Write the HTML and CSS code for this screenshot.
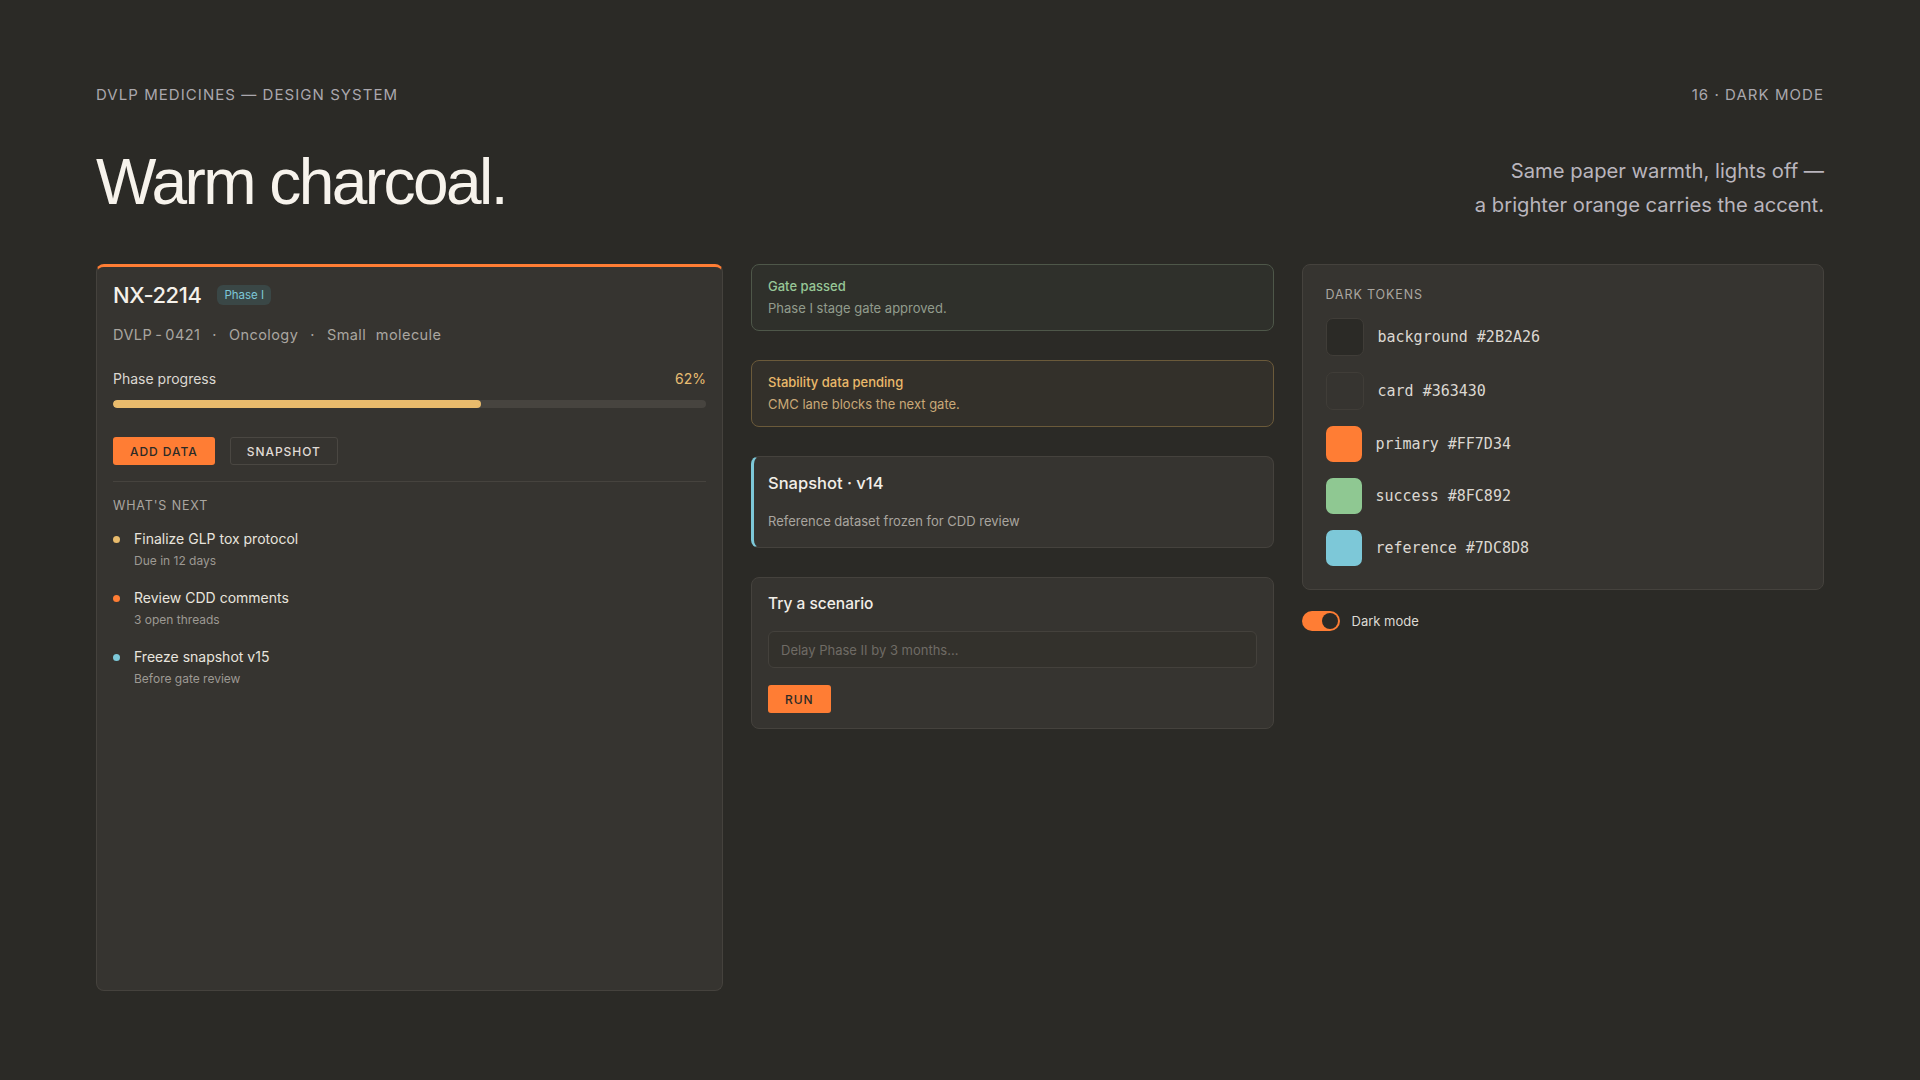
FILE: index.html
```html
<!DOCTYPE html>
<html>
<head>
    <title>Dark Mode - DVLP Design System</title>
    <meta name="viewport" content="width=device-width, initial-scale=1.0">
    <link rel="stylesheet" href="styles.css">
</head>
<body>
    <div class="page">
        <header class="topbar">
            <span class="eyebrow">DVLP MEDICINES — DESIGN SYSTEM</span>
            <span class="eyebrow">16 · DARK MODE</span>
        </header>

        <section class="hero">
            <h1 class="heading">Warm charcoal.</h1>
            <p class="lede">Same paper warmth, lights off —<br>a brighter orange carries the accent.</p>
        </section>

        <main class="grid">
            <!-- Program card -->
            <article class="card program">
                <div class="title-row">
                    <h2 class="program-name">NX-2214</h2>
                    <span class="badge">Phase I</span>
                </div>
                <div class="meta">DVLP<span class="dash">-</span>0421<span class="sep">·</span>Oncology<span class="sep">·</span>Small molecule</div>

                <div class="progress-head">
                    <span>Phase progress</span>
                    <span class="pct">62%</span>
                </div>
                <div class="bar"><div class="bar-fill" style="width: 62%"></div></div>

                <div class="actions">
                    <button class="btn btn-primary">Add data</button>
                    <button class="btn btn-ghost">Snapshot</button>
                </div>

                <div class="next">
                    <div class="section-label">WHAT'S NEXT</div>
                    <ul class="todo">
                        <li>
                            <span class="dot dot-amber"></span>
                            <div>
                                <div class="todo-title">Finalize GLP tox protocol</div>
                                <div class="todo-sub">Due in 12 days</div>
                            </div>
                        </li>
                        <li>
                            <span class="dot dot-orange"></span>
                            <div>
                                <div class="todo-title">Review CDD comments</div>
                                <div class="todo-sub">3 open threads</div>
                            </div>
                        </li>
                        <li>
                            <span class="dot dot-teal"></span>
                            <div>
                                <div class="todo-title">Freeze snapshot v15</div>
                                <div class="todo-sub">Before gate review</div>
                            </div>
                        </li>
                    </ul>
                </div>
            </article>

            <!-- Middle column -->
            <div class="stack">
                <div class="callout callout-ok">
                    <div class="callout-title">Gate passed</div>
                    <div class="callout-text">Phase I stage gate approved.</div>
                </div>
                <div class="callout callout-warn">
                    <div class="callout-title">Stability data pending</div>
                    <div class="callout-text">CMC lane blocks the next gate.</div>
                </div>
                <div class="card snapshot">
                    <div class="snapshot-title">Snapshot · v14</div>
                    <div class="snapshot-text">Reference dataset frozen for CDD review</div>
                </div>
                <div class="card scenario">
                    <div class="scenario-title">Try a scenario</div>
                    <input class="scenario-input" type="text" placeholder="Delay Phase II by 3 months...">
                    <button class="btn btn-primary">Run</button>
                </div>
            </div>

            <!-- Right column -->
            <div class="stack stack-tight">
                <div class="card tokens">
                    <div class="section-label">DARK TOKENS</div>
                    <ul class="token-list">
                        <li><span class="swatch swatch-outline sw-bg"></span><code>background #2B2A26</code></li>
                        <li><span class="swatch swatch-outline sw-card"></span><code>card #363430</code></li>
                        <li><span class="swatch sw-primary"></span><code>primary #FF7D34</code></li>
                        <li><span class="swatch sw-success"></span><code>success #8FC892</code></li>
                        <li><span class="swatch sw-ref"></span><code>reference #7DC8D8</code></li>
                    </ul>
                </div>
                <div class="toggle-row">
                    <span class="toggle"><span class="knob"></span></span>
                    <span>Dark mode</span>
                </div>
            </div>
        </main>
    </div>
</body>
</html>
```

FILE: styles.css
```css
* {
    box-sizing: border-box;
}

body {
    margin: 0;
    background-color: #2b2a26;
    color: #e8e4de;
    font-family: Inter, "Liberation Sans", sans-serif;
}

.page {
    height: 1080px;
    padding: 85px 96px 89px;
    display: flex;
    flex-direction: column;
}

.topbar {
    display: flex;
    justify-content: space-between;
}

.eyebrow {
    font-size: 15px;
    line-height: 20px;
    letter-spacing: 0.07em;
    color: #aaa7ad;
}

.hero {
    margin-top: 42px;
    display: flex;
    justify-content: space-between;
    align-items: flex-end;
}

.heading {
    margin: 0 0 5px;
    font-family: "Liberation Sans", Arial, sans-serif;
    font-weight: 400;
    font-size: 64px;
    line-height: 1.1;
    letter-spacing: -0.04em;
    color: #f7f3ec;
}

.lede {
    margin: 0;
    text-align: right;
    font-size: 20.2px;
    line-height: 34px;
    color: #b9b5bd;
}

.grid {
    flex: 1;
    margin-top: 42px;
    display: grid;
    grid-template-columns: 1.2fr 1fr 1fr;
    gap: 28px;
}

.card {
    background-color: #363430;
    border: 1px solid #45423d;
    border-radius: 8px;
}

/* program card */
.program {
    border-top: 3px solid #ff7d34;
    padding: 16px;
}

.title-row {
    display: flex;
    align-items: center;
    gap: 16px;
    height: 24px;
}

.program-name {
    margin: 0;
    font-size: 22px;
    font-weight: 500;
    letter-spacing: -0.02em;
    color: #f5f1ea;
}

.badge {
    font-size: 11.5px;
    line-height: 20px;
    padding: 0 7px;
    border-radius: 6px;
    background-color: #3a4746;
    color: #7dc8d8;
}

.meta {
    margin-top: 18px;
    font-size: 14.5px;
    line-height: 20px;
    letter-spacing: 0.03em;
    word-spacing: 5px;
    color: #aaa6a0;
}

.dash {
    margin: 0 3px;
}

.sep {
    margin: 0 12px;
}

.progress-head {
    margin-top: 25px;
    display: flex;
    justify-content: space-between;
    font-size: 14px;
    line-height: 18px;
    color: #dcd8d2;
}

.pct {
    color: #e8bd72;
}

.bar {
    margin-top: 12px;
    height: 8px;
    border-radius: 4px;
    background-color: #47443f;
    overflow: hidden;
}

.bar-fill {
    height: 100%;
    border-radius: 4px;
    background-color: #e9bb6c;
}

.actions {
    margin-top: 29px;
    display: flex;
    gap: 15px;
}

.btn {
    height: 28px;
    padding: 0 16px;
    border: 1px solid transparent;
    border-radius: 3px;
    font-family: Inter, "Liberation Sans", sans-serif;
    font-size: 12px;
    font-weight: 500;
    letter-spacing: 0.08em;
    text-transform: uppercase;
    cursor: pointer;
}

.btn-primary {
    background-color: #ff7d34;
    color: #2b2a26;
}

.btn-ghost {
    background-color: transparent;
    border-color: #4a4742;
    color: #e0dcd6;
}

.next {
    margin-top: 16px;
    padding-top: 16px;
    border-top: 1px solid #46433e;
}

.section-label {
    font-size: 12.5px;
    line-height: 16px;
    letter-spacing: 0.07em;
    color: #aaa6a0;
}

.todo {
    list-style: none;
    margin: 15px 0 0;
    padding: 0;
    display: flex;
    flex-direction: column;
    gap: 19px;
}

.todo li {
    display: flex;
    gap: 14px;
}

.dot {
    width: 7px;
    height: 7px;
    margin-top: 7px;
    border-radius: 50%;
    flex-shrink: 0;
}

.dot-amber { background-color: #e9bb6c; }
.dot-orange { background-color: #ff7d34; }
.dot-teal { background-color: #7dc8d8; }

.todo-title {
    font-size: 14px;
    line-height: 20px;
    color: #e8e4de;
}

.todo-sub {
    margin-top: 4px;
    font-size: 12px;
    line-height: 16px;
    color: #9d9993;
}

/* middle + right columns */
.stack {
    display: flex;
    flex-direction: column;
    gap: 29px;
    align-self: start;
}

.stack-tight {
    gap: 21px;
}

.callout {
    border: 1px solid;
    border-radius: 8px;
    padding: 12px 16px 13px;
    font-size: 13px;
    line-height: 18px;
}

.callout-title {
    font-weight: 500;
}

.callout-text {
    margin-top: 4px;
}

.callout-ok {
    background-color: #2f302b;
    border-color: #4e5749;
}

.callout-ok .callout-title { color: #97c797; }
.callout-ok .callout-text { color: #929c8d; }

.callout-warn {
    background-color: #33302a;
    border-color: #6b5a3a;
}

.callout-warn .callout-title { color: #eab96b; }
.callout-warn .callout-text { color: #c9a877; }

.snapshot {
    border-left: 3px solid #7dc8d8;
    padding: 15px 16px 17px 14px;
}

.snapshot-title {
    font-size: 16.5px;
    line-height: 22px;
    font-weight: 500;
    color: #f2eee8;
}

.snapshot-text {
    margin-top: 18px;
    font-size: 13px;
    line-height: 18px;
    color: #a9a59f;
}

.scenario {
    padding: 15px 16px;
}

.scenario-title {
    font-size: 15.5px;
    line-height: 22px;
    font-weight: 500;
    color: #f2eee8;
}

.scenario-input {
    display: block;
    width: 100%;
    height: 37px;
    margin: 16px 0 17px;
    padding: 0 12px;
    background-color: #33312c;
    border: 1px solid #44413c;
    border-radius: 6px;
    font-family: Inter, "Liberation Sans", sans-serif;
    font-size: 13px;
    color: #e8e4de;
}

.scenario-input::placeholder {
    color: #6f6b65;
}

.tokens {
    padding: 22px 23px 23px;
}

.token-list {
    list-style: none;
    margin: 15px 0 0;
    padding: 0;
    display: flex;
    flex-direction: column;
    gap: 16px;
}

.token-list li {
    display: flex;
    align-items: center;
    gap: 14px;
}

.swatch {
    width: 36px;
    height: 36px;
    border-radius: 7px;
    box-sizing: content-box;
}

.swatch-outline {
    border: 1px solid #403d38;
}

.sw-bg { background-color: #2b2a26; }
.sw-card { background-color: #363430; }
.sw-primary { background-color: #ff7d34; }
.sw-success { background-color: #8fc892; }
.sw-ref { background-color: #7dc8d8; }

code {
    font-family: "DejaVu Sans Mono", "Liberation Mono", monospace;
    font-size: 15px;
    color: #dcd8d2;
}

.toggle-row {
    display: flex;
    align-items: center;
    gap: 12px;
    font-size: 13px;
    color: #dedad4;
}

.toggle {
    position: relative;
    width: 38px;
    height: 20px;
    border-radius: 10px;
    background-color: #ff7d34;
}

.knob {
    position: absolute;
    top: 2px;
    right: 2px;
    width: 16px;
    height: 16px;
    border-radius: 50%;
    background-color: #2b2a26;
}
```
